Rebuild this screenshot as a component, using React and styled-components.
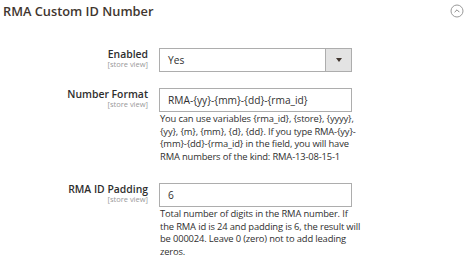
import React from "react";
import styled, { createGlobalStyle } from "styled-components";

const Global = createGlobalStyle`
  html, body { margin: 0; padding: 0; background: #fff; }
  body { font-family: "Open Sans", "Noto Sans", sans-serif; color: #303030; }
`;

const Page = styled.div`
  width: 474px;
  height: 267px;
  overflow: hidden;
`;

const Header = styled.div`
  display: flex;
  align-items: center;
  justify-content: space-between;
  height: 22px;
  padding: 0 10px 0 3px;
`;

const Title = styled.h2`
  margin: 0;
  font-size: 12.8px;
  font-weight: 600;
  color: #41362f;
`;

const Collapse = styled.svg`
  width: 14px;
  height: 14px;
  display: block;
`;

const Form = styled.div`
  display: flex;
  flex-direction: column;
  padding-top: 26px;
`;

const Row = styled.div`
  display: grid;
  grid-template-columns: 148px 193px;
  column-gap: 11px;
  align-items: start;
  margin-bottom: ${(p) => p.$gap || 0}px;
`;

const LabelCol = styled.div`
  display: flex;
  flex-direction: column;
  align-items: flex-end;
`;

const Label = styled.span`
  font-size: 10.4px;
  font-weight: 600;
  color: #2e2e2e;
  line-height: 12px;
`;

const Scope = styled.span`
  font-size: 7.5px;
  color: #999;
  line-height: 9px;
`;

const Control = styled.div`
  display: flex;
  flex-direction: column;
`;

const Input = styled.div`
  box-sizing: border-box;
  height: 24px;
  border: 1px solid #adadad;
  display: flex;
  align-items: center;
  padding-left: 8px;
  font-size: 10.2px;
  color: #303030;
`;

const Select = styled(Input)`
  padding-left: 0;
  justify-content: space-between;
`;

const SelectValue = styled.span`
  padding-left: 8px;
`;

const SelectButton = styled.div`
  width: 25px;
  height: 100%;
  background: #e3e3e3;
  border-left: 1px solid #adadad;
  display: flex;
  align-items: center;
  justify-content: center;
`;

const Arrow = styled.div`
  width: 0;
  height: 0;
  border-left: 3px solid transparent;
  border-right: 3px solid transparent;
  border-top: 4px solid #41362f;
`;

const Note = styled.p`
  margin: 1px ${(p) => -(p.$extend || 8)}px 0 1px;
  font-size: 9.4px;
  letter-spacing: -0.15px;
  line-height: 12.7px;
  color: #303030;
`;

function Field({ label, children, gap }) {
  return (
    <Row $gap={gap}>
      <LabelCol>
        <Label>{label}</Label>
        <Scope>[store view]</Scope>
      </LabelCol>
      <Control>{children}</Control>
    </Row>
  );
}

export default function App() {
  return (
    <Page>
      <Global />
      <Header>
        <Title>RMA Custom ID Number</Title>
        <Collapse viewBox="0 0 14 14">
          <circle cx="7" cy="7" r="6" fill="none" stroke="#9a9a9a" strokeWidth="1" />
          <path d="M4.6 8.2 L7 5.8 L9.4 8.2" fill="none" stroke="#8a8a8a" strokeWidth="1" />
        </Collapse>
      </Header>
      <Form>
        <Field label="Enabled" gap={16}>
          <Select>
            <SelectValue>Yes</SelectValue>
            <SelectButton>
              <Arrow />
            </SelectButton>
          </Select>
        </Field>
        <Field label="Number Format" gap={19}>
          <Input>RMA-{"{yy}"}-{"{mm}"}-{"{dd}"}-{"{rma_id}"}</Input>
          <Note $extend={8}>
            You can use variables {"{rma_id}"}, {"{store}"}, {"{yyyy}"},
            {" {yy}"}, {"{m}"}, {"{mm}"}, {"{d}"}, {"{dd}"}. If you type RMA-{"{yy}"}-
            {"{mm}"}-{"{dd}"}-{"{rma_id}"} in the field, you will have RMA numbers of the
            kind: RMA-13-08-15-1
          </Note>
        </Field>
        <Field label="RMA ID Padding">
          <Input>6</Input>
          <Note $extend={16}>
            Total number of digits in the RMA number. If
            <br />
            the RMA id is 24 and padding is 6, the result will be 000024. Leave
            0 (zero) not to add leading zeros.
          </Note>
        </Field>
      </Form>
    </Page>
  );
}
